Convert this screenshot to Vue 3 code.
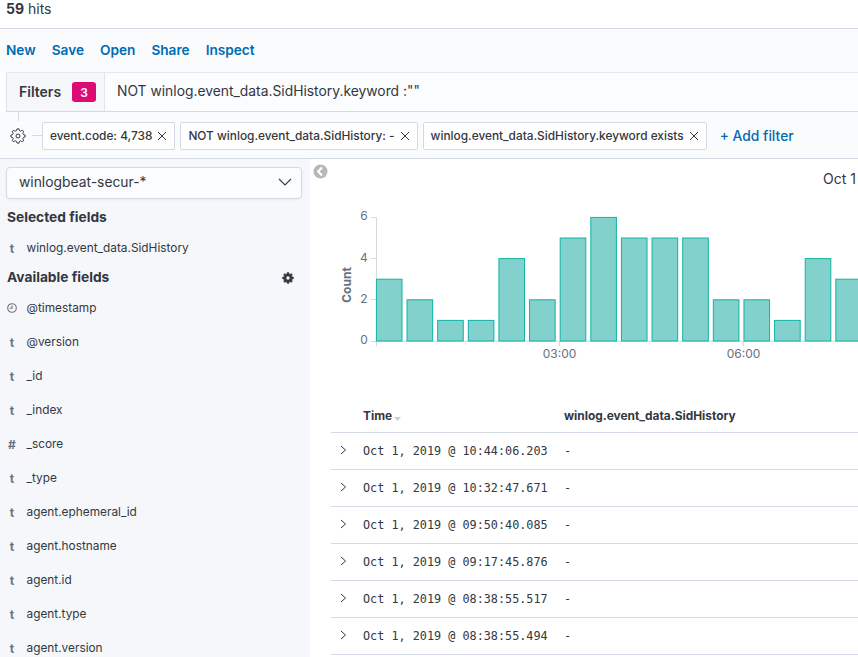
<script setup>
const gear = "M19.4 15a1.65 1.65 0 0 0 .33 1.82l.06.06a2 2 0 0 1 0 2.83 2 2 0 0 1-2.83 0l-.06-.06a1.65 1.65 0 0 0-1.82-.33 1.65 1.65 0 0 0-1 1.51V21a2 2 0 0 1-2 2 2 2 0 0 1-2-2v-.09A1.65 1.65 0 0 0 9 19.4a1.65 1.65 0 0 0-1.82.33l-.06.06a2 2 0 0 1-2.83 0 2 2 0 0 1 0-2.83l.06-.06a1.65 1.65 0 0 0 .33-1.82 1.65 1.65 0 0 0-1.51-1H3a2 2 0 0 1-2-2 2 2 0 0 1 2-2h.09A1.65 1.65 0 0 0 4.6 9a1.65 1.65 0 0 0-.33-1.82l-.06-.06a2 2 0 0 1 0-2.83 2 2 0 0 1 2.83 0l.06.06a1.65 1.65 0 0 0 1.82.33H9a1.65 1.65 0 0 0 1-1.51V3a2 2 0 0 1 2-2 2 2 0 0 1 2 2v.09a1.65 1.65 0 0 0 1 1.51 1.65 1.65 0 0 0 1.82-.33l.06-.06a2 2 0 0 1 2.83 0 2 2 0 0 1 0 2.83l-.06.06a1.65 1.65 0 0 0-.33 1.82V9a1.65 1.65 0 0 0 1.51 1H21a2 2 0 0 1 2 2 2 2 0 0 1-2 2h-.09a1.65 1.65 0 0 0-1.51 1z"
const links = ['New', 'Save', 'Open', 'Share', 'Inspect']
const pills = ['event.code: 4,738', 'NOT winlog.event_data.SidHistory: -', 'winlog.event_data.SidHistory.keyword exists']
const fields = [
  ['clock', '@timestamp'], ['t', '@version'], ['t', '_id'], ['t', '_index'], ['#', '_score'], ['t', '_type'],
  ['t', 'agent.ephemeral_id'], ['t', 'agent.hostname'], ['t', 'agent.id'], ['t', 'agent.type'], ['t', 'agent.version']
]
const counts = [3, 2, 1, 1, 4, 2, 5, 6, 5, 5, 5, 2, 2, 1, 4, 3]
const bars = counts.map((c, i) => ({ x: 66.4 + i * 30.63, y: 181 - c * 20.6, h: c * 20.6 }))
const rows = ['10:44:06.203', '10:32:47.671', '09:50:40.085', '09:17:45.876', '08:38:55.517', '08:38:55.494']
</script>

<template>
  <div class="page">
    <div class="hits"><b>59</b> hits</div>
    <nav class="topnav"><a v-for="l in links" :key="l">{{ l }}</a></nav>
    <div class="query">
      <div class="filters-btn"><span class="lbl">Filters</span><span class="badge">3</span></div>
      <div class="query-text">NOT winlog.event_data.SidHistory.keyword :""</div>
    </div>
    <div class="filter-row">
      <span class="stem"></span>
      <svg class="gear-o" width="16" height="16" viewBox="0 0 24 24" fill="none" stroke="#343741" stroke-width="1.5"><circle cx="12" cy="12" r="3" /><path :d="gear" /></svg>
      <span class="dash"></span>
      <div v-for="p in pills" :key="p" class="pill">
        {{ p }}
        <svg width="10" height="10" viewBox="0 0 10 10" stroke="#343741" stroke-width="1" fill="none"><path d="M1 1l8 8M9 1l-8 8" /></svg>
      </div>
      <a class="add">+ Add filter</a>
    </div>
    <div class="body">
      <aside class="side">
        <div class="select">
          winlogbeat-secur-*
          <svg width="14" height="8" viewBox="0 0 14 8" fill="none" stroke="#343741" stroke-width="1.1"><path d="M1 1l6 6 6-6" /></svg>
        </div>
        <h3 class="sel-title">Selected fields</h3>
        <div class="field first"><span class="ty">t</span>winlog.event_data.SidHistory</div>
        <div class="avail">
          <h3>Available fields</h3>
          <svg width="12" height="12" viewBox="0 0 24 24"><path :d="gear" fill="#343741" stroke="#343741" stroke-width="1.5" /><circle cx="12" cy="12" r="3.4" fill="#f5f7fa" /></svg>
        </div>
        <div class="list">
          <div v-for="f in fields" :key="f[1]" class="field">
            <span class="ty">
              <svg v-if="f[0] === 'clock'" width="10" height="10" viewBox="0 0 10 10" fill="none" stroke="#69707d" stroke-width="1.1"><circle cx="5" cy="5" r="4.3" /><path d="M5 2.4V5.2H2.8" /></svg>
              <template v-else>{{ f[0] }}</template>
            </span>{{ f[1] }}
          </div>
        </div>
      </aside>
      <main class="main">
        <div class="chart">
          <svg class="collapse" width="15" height="15" viewBox="0 0 15 15"><circle cx="7.5" cy="7.5" r="7" fill="#b8b8b8" /><path d="M9 3.6L5.2 7.5 9 11.4" fill="none" stroke="#fff" stroke-width="2.2" /></svg>
          <div class="date">Oct 1</div>
          <svg class="plot" width="548" height="210" viewBox="0 0 548 210">
            <g fill="none" stroke="#d9d9d9" stroke-width="1">
              <path d="M66.5 57V186M61 57.5H66M61 98.5H66M61 139.5H66M61 181.5H548M249.5 181V186M433.5 181V186" />
            </g>
            <rect v-for="(b, i) in bars" :key="i" :x="b.x" :y="b.y" width="25.6" :height="b.h" fill="#82d1cc" stroke="#10b3a5" stroke-width="1" />
            <g class="ticks">
              <text x="54" y="60">6</text><text x="54" y="102">4</text><text x="54" y="143">2</text><text x="54" y="184">0</text>
              <text x="249.5" y="198">03:00</text><text x="433.5" y="198">06:00</text>
            </g>
            <text class="axis" transform="translate(41 125) rotate(-90)" text-anchor="middle">Count</text>
          </svg>
        </div>
        <div class="table">
          <div class="thead">
            <span class="c-time">Time<svg width="7" height="4" viewBox="0 0 7 4"><path d="M0 0h7L3.5 4z" fill="#c9ced6" /></svg></span>
            <span>winlog.event_data.SidHistory</span>
          </div>
          <div v-for="r in rows" :key="r" class="row">
            <svg class="chev" width="7" height="10" viewBox="0 0 7 10" fill="none" stroke="#343741" stroke-width="1"><path d="M1 1l4.5 4L1 9" /></svg>
            <span class="c-time mono">Oct 1, 2019 @ {{ r }}</span>
            <span class="mono">-</span>
          </div>
        </div>
      </main>
    </div>
  </div>
</template>

<style scoped>
.page { width: 858px; height: 657px; overflow: hidden; display: flex; flex-direction: column; background: #fff; color: #343741; font-family: Inter, "Liberation Sans", sans-serif; font-size: 14px; }
.hits { flex: none; height: 17px; padding: 0 6px 11px; line-height: 17px; border-bottom: 1px solid #d3dae6; }
.hits b { font-weight: 700; }
.topnav { flex: none; box-sizing: border-box; height: 43px; display: flex; gap: 16px; align-items: center; padding: 0 6px 2px; background: #fafbfd; font-size: 13.65px; }
.topnav a { color: #006bb4; font-weight: 600; }
.query { flex: none; height: 38px; display: flex; align-items: stretch; margin-left: 6px; border-top: 1px solid #e3e7ee; border-bottom: 1px solid #d3dae6; background: #fbfcfd; box-shadow: 0 1px 2px rgba(152, 162, 179, .2); }
.filters-btn { width: 99px; box-sizing: border-box; display: flex; align-items: center; padding-left: 12px; background: #f5f7fa; border: 1px solid #e0e4ec; border-width: 0 1px; font-weight: 600; }
.lbl { width: 53px; margin-bottom: 2px; }
.badge { width: 24px; height: 20px; border-radius: 3px; background: #dd0a73; color: #fff; font-size: 12px; font-weight: 600; display: flex; align-items: center; justify-content: center; }
.query-text { padding: 0 0 2px 12px; display: flex; align-items: center; font-size: 13.85px; }
.filter-row { flex: none; box-sizing: border-box; height: 47px; position: relative; display: flex; align-items: center; gap: 5px; padding: 2px 0 0 42px; background: #fafbfd; border-bottom: 1px solid #d3dae6; }
.stem { position: absolute; left: 18px; top: 0; width: 1px; height: 9px; background: #d3dae6; }
.dash { position: absolute; left: 32px; top: 23px; width: 10px; height: 1px; background: #d3dae6; }
.gear-o { position: absolute; left: 10px; top: 16px; }
.pill { height: 28px; box-sizing: border-box; display: flex; align-items: center; gap: 5px; padding: 0 7px; background: #fff; border: 1px solid #d3dae6; border-radius: 2px; font-size: 11.87px; font-weight: 500; white-space: nowrap; }
.add { color: #006bb4; font-weight: 500; margin-left: 8px; white-space: nowrap; font-size: 13.85px; }
.body { flex: 1; min-height: 0; display: flex; }
.side { width: 310px; flex: none; box-sizing: border-box; background: #f5f7fa; padding: 8px 8px 0 7px; overflow: hidden; }
.select { height: 32px; margin-left: -1px; box-sizing: border-box; display: flex; align-items: center; justify-content: space-between; padding: 0 9px 2px 12px; background: #fbfcfd; border: 1px solid #d3dae6; border-radius: 4px; font-size: 13.85px; box-shadow: 0 1px 2px rgba(152, 162, 179, .12); }
h3 { margin: 0; font-size: 13.75px; font-weight: 700; line-height: 17px; }
.sel-title { margin-top: 10px; }
.field { height: 34px; display: flex; align-items: center; font-size: 11.85px; white-space: nowrap; }
.field.first { height: 30px; margin-top: 7px; }
.ty { width: 10px; margin-right: 9.5px; display: flex; justify-content: center; color: #69707d; font-weight: 700; font-size: 12px; }
.avail { display: flex; justify-content: space-between; align-items: center; margin-top: 6px; height: 17px; }
.avail svg { margin-right: 8px; }
.list { margin-top: 5px; }
.main { flex: 1; min-width: 0; overflow: hidden; }
.chart { height: 240px; position: relative; }
.collapse { position: absolute; left: 3px; top: 5px; }
.date { position: absolute; left: 513px; top: 11px; font-size: 14px; line-height: 17px; }
.plot { position: absolute; left: 0; top: 1px; display: block; }
.ticks text { font-size: 12px; fill: #69707d; font-family: Inter, sans-serif; text-anchor: middle; }
.axis { font-size: 12px; font-weight: 700; fill: #69707d; }
.table { margin-left: 21px; font-size: 11.9px; }
.thead { height: 33px; display: flex; align-items: center; font-weight: 700; border-bottom: 1px solid #d3dae6; padding-left: 32px; }
.c-time { width: 201px; flex: none; }
.c-time svg { margin-left: 2px; vertical-align: -1px; }
.row { height: 36px; display: flex; align-items: center; padding-left: 32px; position: relative; border-bottom: 1px solid #d3dae6; }
.chev { position: absolute; left: 9px; top: 12px; }
.mono { font-family: "DejaVu Sans Mono", "Liberation Mono", monospace; font-size: 11.8px; }
</style>

<style>
html, body { margin: 0; overflow: hidden; }
</style>
